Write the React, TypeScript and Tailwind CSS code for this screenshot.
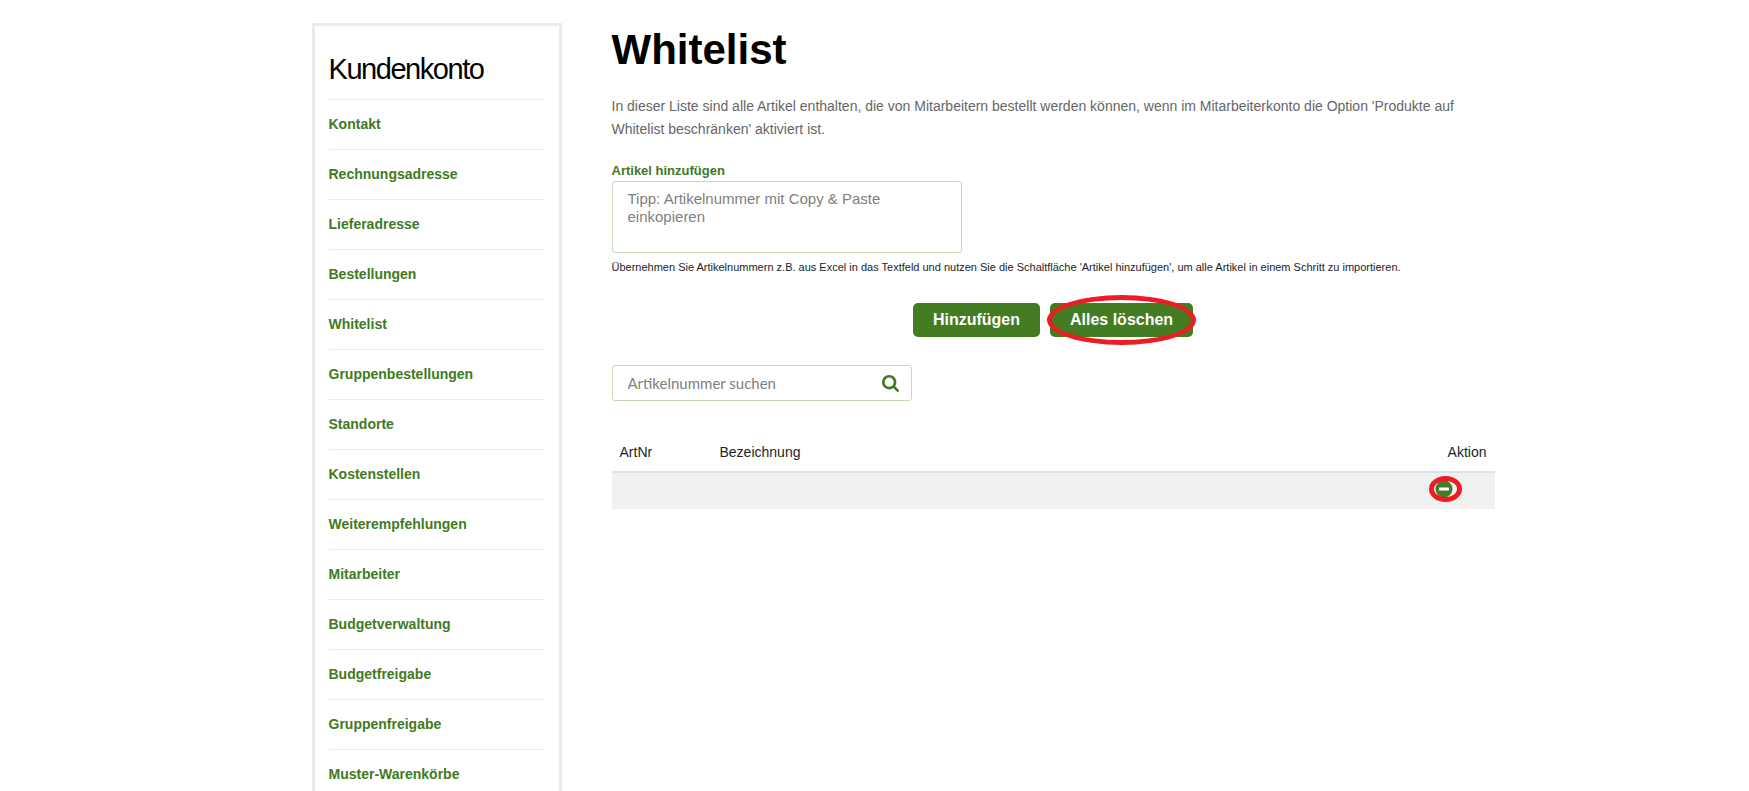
import * as React from "react";

const menu = [
  "Kontakt",
  "Rechnungsadresse",
  "Lieferadresse",
  "Bestellungen",
  "Whitelist",
  "Gruppenbestellungen",
  "Standorte",
  "Kostenstellen",
  "Weiterempfehlungen",
  "Mitarbeiter",
  "Budgetverwaltung",
  "Budgetfreigabe",
  "Gruppenfreigabe",
  "Muster-Warenkörbe",
];

function Sidebar() {
  return (
    <aside className="w-[250px] shrink-0 border-3 border-[#ebebeb] px-3.5 pt-5">
      <h2 className="pb-[7px] text-[29px] leading-[46px] tracking-tighter text-black">
        Kundenkonto
      </h2>
      <nav>
        <ul>
          {menu.map((item) => (
            <li key={item} className="flex h-[50px] items-center border-t border-[#ebebeb] pb-0.5">
              <a href="#" className="text-sm font-bold text-[#3f7a22]">
                {item}
              </a>
            </li>
          ))}
        </ul>
      </nav>
    </aside>
  );
}

function SearchIcon() {
  return (
    <svg viewBox="0 128 1664 1664" className="size-[17px]" fill="currentColor" aria-hidden="true">
      <path d="M1152 832q0-185-131.5-316.5t-316.5-131.5-316.5 131.5-131.5 316.5 131.5 316.5 316.5 131.5 316.5-131.5 131.5-316.5zm512 832q0 52-38 90t-90 38q-54 0-90-38l-343-342q-179 124-399 124-143 0-273.5-55.5t-225-150-150-225-55.5-273.5 55.5-273.5 150-225 225-150 273.5-55.5 273.5 55.5 225 150 150 225 55.5 273.5q0 220-124 399l343 343q37 37 37 90z" />
    </svg>
  );
}

function AddForm() {
  return (
    <form onSubmit={(e) => e.preventDefault()}>
      <label htmlFor="articles" className="block text-[13px] leading-5 font-bold text-[#3f7a22]">
        Artikel hinzufügen
      </label>
      <textarea
        id="articles"
        placeholder="Tipp: Artikelnummer mit Copy & Paste einkopieren"
        className="block h-[72px] w-[350px] resize-none rounded-[3px] border border-[#c3d9b8] px-[15px] py-2 text-[15px] leading-[18px] placeholder:text-[#808080]"
      />
      <p className="mt-1.5 text-[11px] leading-4 text-[#212529]">
        Übernehmen Sie Artikelnummern z.B. aus Excel in das Textfeld und nutzen Sie die Schaltfläche
        'Artikel hinzufügen', um alle Artikel in einem Schritt zu importieren.
      </p>
      <div className="mt-7 flex justify-center gap-2.5">
        <button type="submit" className="h-[34px] rounded-[5px] bg-[#437c23] px-5 font-bold text-white">
          Hinzufügen
        </button>
        <div className="relative">
          <button type="button" className="h-[34px] rounded-[5px] bg-[#437c23] px-5 font-bold text-white">
            Alles löschen
          </button>
          <span className="pointer-events-none absolute -inset-x-[3px] -inset-y-2 rounded-[50%] border-5 border-[#ed1c24]" />
        </div>
      </div>
    </form>
  );
}

function ArticleTable() {
  return (
    <table className="mt-9 w-full text-left text-sm text-[#212529]">
      <thead>
        <tr className="h-[35px] border-b-2 border-[#dee2e6]">
          <th className="w-[100px] px-2 pb-1 font-normal">ArtNr</th>
          <th className="px-2 pb-1 font-normal">Bezeichnung</th>
          <th className="w-[80px] px-2 pb-1 text-right font-normal">Aktion</th>
        </tr>
      </thead>
      <tbody>
        <tr className="h-[37px] bg-[#f1f1f1]">
          <td />
          <td />
          <td className="pb-1 pl-5">
            <div className="relative flex size-[18px]">
              <button type="button" aria-label="Artikel entfernen" className="size-[18px]">
                <svg viewBox="0 0 18 18" className="size-[18px]">
                  <circle cx="9" cy="9" r="8.5" fill="#437c23" />
                  <rect x="4" y="7.5" width="10" height="3" rx="0.6" fill="#fff" />
                </svg>
              </button>
              <span className="pointer-events-none absolute -inset-y-1 -left-1.5 -right-[9px] rounded-[50%] border-5 border-[#ed1c24]" />
            </div>
          </td>
        </tr>
      </tbody>
    </table>
  );
}

export default function App() {
  return (
    <div className="h-screen overflow-hidden bg-white font-['Liberation_Sans',Arial,sans-serif]">
      <div className="mx-auto flex max-w-[1240px] gap-[50px] pt-[23px] pl-[57px]">
        <Sidebar />
        <main className="min-w-0 flex-1">
          <h1 className="text-[42px] leading-[54px] font-bold text-black">Whitelist</h1>
          <p className="mt-[18px] mb-5 text-sm leading-[23px] text-[#666666]">
            In dieser Liste sind alle Artikel enthalten, die von Mitarbeitern bestellt werden können,
            wenn im Mitarbeiterkonto die Option 'Produkte auf Whitelist beschränken' aktiviert ist.
          </p>
          <AddForm />
          <form
            onSubmit={(e) => e.preventDefault()}
            className="mt-7 flex h-[36px] w-[300px] items-center rounded-[3px] border border-[#c3d9b8] pr-3 pl-[15px]"
          >
            <input
              type="text"
              aria-label="Artikelnummer suchen"
              placeholder="Artikelnummer suchen"
              className="min-w-0 flex-1 font-[Lato,sans-serif] text-[15px] outline-none placeholder:text-[#808080]"
            />
            <button type="submit" aria-label="Suchen" className="text-[#3f7a22]">
              <SearchIcon />
            </button>
          </form>
          <ArticleTable />
        </main>
      </div>
    </div>
  );
}
